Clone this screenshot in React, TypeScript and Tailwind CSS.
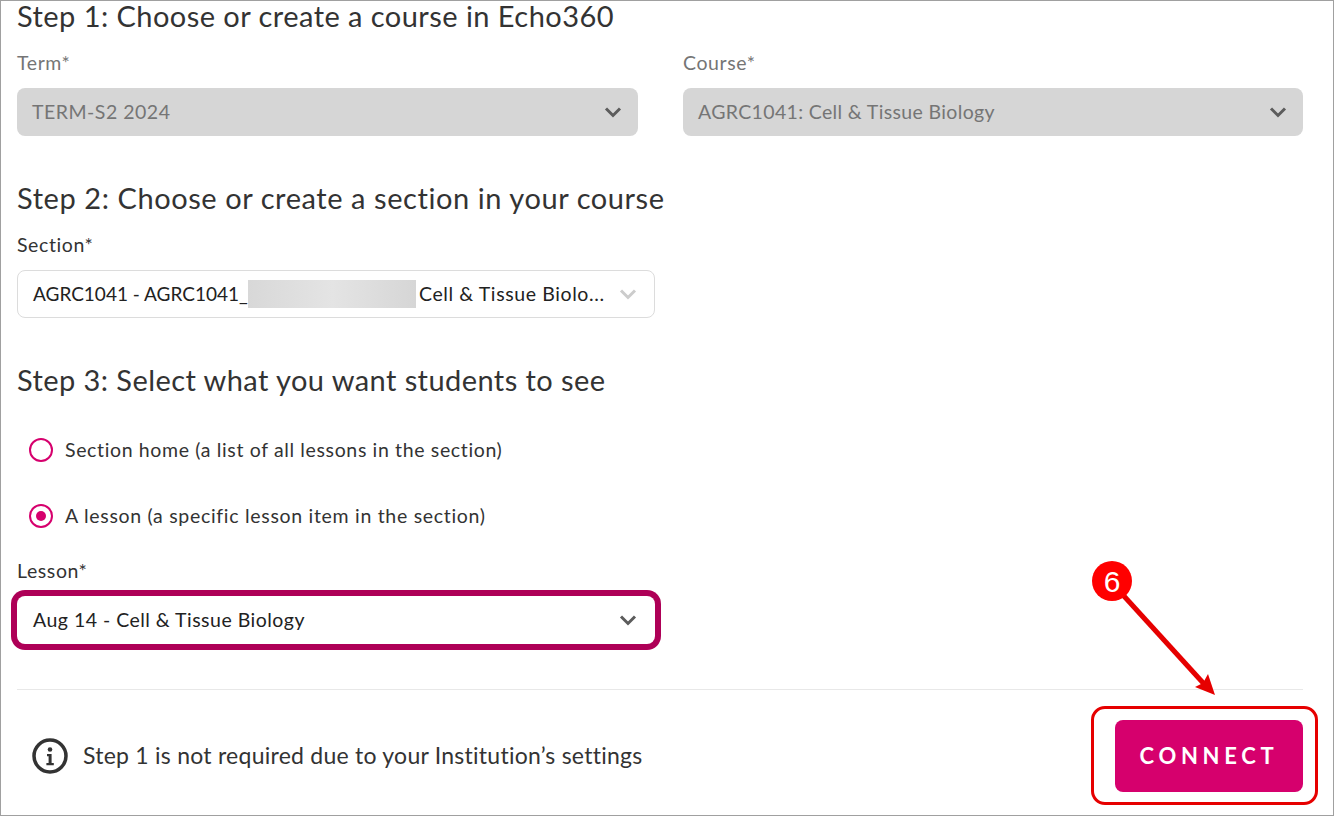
import React from "react";

function Chevron({ className }: { className: string }) {
  return (
    <svg width="18" height="12" viewBox="0 0 18 12" fill="none" className={className}>
      <path d="M2 2.5 L9 9.5 L16 2.5" stroke="currentColor" strokeWidth="3" />
    </svg>
  );
}

function Heading({ children, className }: { children: React.ReactNode; className: string }) {
  return <h2 className={`h-[30px] text-[29px] leading-[30px] text-[#333333] whitespace-nowrap ${className}`}>{children}</h2>;
}

function Label({ children, muted }: { children: React.ReactNode; muted?: boolean }) {
  return <div className={`h-6 text-[19.5px] leading-6 tracking-[0.6px] ${muted ? "text-[#757575]" : "text-[#333333]"}`}>{children}</div>;
}

function Radio({ checked, label, className }: { checked?: boolean; label: string; className: string }) {
  return (
    <div className="flex items-center h-6 pl-3">
      <span className="w-6 h-6 rounded-full border-2 border-[#d6006d] flex items-center justify-center bg-white">
        {checked && <span className="w-2.5 h-2.5 rounded-full bg-[#d6006d]" />}
      </span>
      <span className={`ml-3 text-[19.5px] leading-6 text-[#333333] whitespace-nowrap ${className}`}>{label}</span>
    </div>
  );
}

export default function App() {
  return (
    <div className="relative w-[1334px] h-[816px] bg-white border border-[#a0a0a0] overflow-hidden font-['Lato','Liberation_Sans',sans-serif]">
      <div className="pl-4 pr-[30px]">
        <Heading className="tracking-[0.45px]">Step 1: Choose or create a course in Echo360</Heading>
        <div className="mt-[20px] flex gap-[45px]">
          <div className="w-[621px]">
            <Label muted>Term*</Label>
            <div className="mt-[13px] h-12 rounded-lg bg-[#d6d6d6] flex items-center justify-between pl-[15px] pr-4">
              <span className="text-[19.5px] tracking-[0.5px] text-[#757575]">TERM-S2 2024</span>
              <Chevron className="text-[#5c5c5c]" />
            </div>
          </div>
          <div className="w-[620px]">
            <Label muted>Course*</Label>
            <div className="mt-[13px] h-12 rounded-lg bg-[#d6d6d6] flex items-center justify-between pl-[15px] pr-4">
              <span className="text-[19.5px] tracking-[0.35px] text-[#757575]">AGRC1041: Cell &amp; Tissue Biology</span>
              <Chevron className="text-[#5c5c5c]" />
            </div>
          </div>
        </div>

        <div className="mt-[47px]">
          <Heading className="tracking-[0.57px]">Step 2: Choose or create a section in your course</Heading>
        </div>
        <div className="mt-[20px]">
          <Label>Section*</Label>
        </div>
        <div className="mt-[13px] w-[638px] h-12 rounded-lg bg-white border border-[#dcdcdc] flex items-center justify-between pl-[15px] pr-[17px]">
          <span className="flex items-center text-[#222222] whitespace-nowrap">
            <span className="w-[215px] text-[19px]">AGRC1041 - AGRC1041_</span>
            <span className="w-[168px] h-[28px] bg-linear-to-r from-[#d8d8d8] via-[#e4e4e4] to-[#d6d6d6] mr-[3px]" />
            <span className="text-[19.5px] tracking-[0.6px]">Cell &amp; Tissue Biolo...</span>
          </span>
          <Chevron className="text-[#cccccc]" />
        </div>

        <div className="mt-[47px]">
          <Heading className="tracking-[0.43px]">Step 3: Select what you want students to see</Heading>
        </div>
        <div className="mt-[43px]">
          <Radio className="tracking-[0.64px]" label="Section home (a list of all lessons in the section)" />
        </div>
        <div className="mt-[42px]">
          <Radio className="tracking-[0.7px]" checked label="A lesson (a specific lesson item in the section)" />
        </div>
        <div className="mt-[31px]">
          <Label>Lesson*</Label>
        </div>
        <div className="mt-[13px] w-[638px] h-12 rounded-lg bg-white ring-[6px] ring-[#ae0057] flex items-center justify-between pl-[16px] pr-[18px]">
          <span className="text-[19.5px] tracking-[0.48px] text-[#222222] whitespace-nowrap">Aug 14 - Cell &amp; Tissue Biology</span>
          <Chevron className="text-[#5c5c5c]" />
        </div>

        <div className="mt-[45px] border-t border-[#e8e8e8]" />

        <div className="mt-[30px] flex items-center justify-between">
          <div className="flex items-center pl-[15px]">
            <svg width="36" height="36" viewBox="0 0 36 36" fill="none">
              <circle cx="18" cy="18" r="16" stroke="#333333" strokeWidth="3.5" />
              <circle cx="18" cy="11.5" r="2.3" fill="#333333" />
              <path d="M15 16h4.6v9h2.2v2.2h-7.4V25h2.2v-6.8H15z" fill="#333333" />
            </svg>
            <span className="ml-[15px] pb-[3px] text-[23px] leading-7 tracking-[0.25px] text-[#333333] whitespace-nowrap">Step 1 is not required due to your Institution’s settings</span>
          </div>
          <button className="w-[188px] h-[72px] pb-[2px] rounded-lg bg-[#d6006d] text-white text-[22px] font-bold tracking-[4.7px]">CONNECT</button>
        </div>
      </div>

      {/* annotation */}
      <div className="absolute left-[1090px] top-[705px] w-[227px] h-[99px] rounded-[14px] border-[3px] border-[#e60000]" />
      <svg className="absolute left-[1080px] top-[560px]" width="150" height="140" viewBox="0 0 150 140" fill="none">
        <path d="M42 34 L124 124" stroke="#e60000" strokeWidth="5" />
        <path d="M134 134 L114 126 L122 122 L127 113 Z" fill="#e60000" />
      </svg>
      <div className="absolute left-[1091px] top-[560px] w-10 h-10 rounded-full bg-[#ff0000] flex items-center justify-center text-white text-[30px] font-['Liberation_Sans',sans-serif]">6</div>
    </div>
  );
}
